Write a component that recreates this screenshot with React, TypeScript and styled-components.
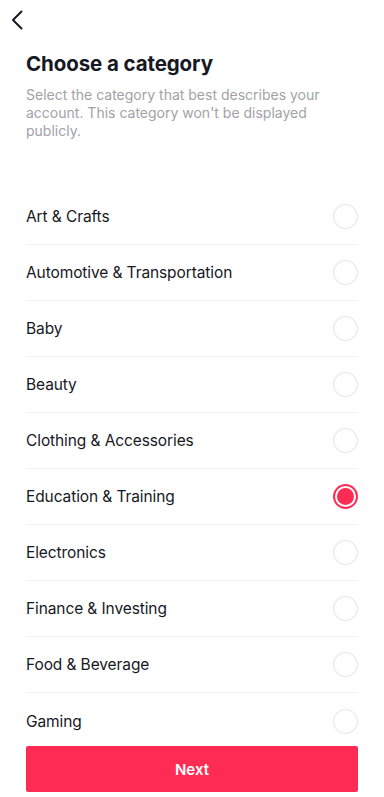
import React, { useState } from "react";
import styled, { createGlobalStyle } from "styled-components";

const GlobalStyle = createGlobalStyle`
  * {
    box-sizing: border-box;
  }
  body {
    margin: 0;
    background: #ffffff;
    font-family: Inter, "Noto Sans", "Liberation Sans", sans-serif;
    -webkit-font-smoothing: antialiased;
  }
`;

const Screen = styled.div`
  width: 384px;
  height: 797px;
  display: flex;
  flex-direction: column;
  background: #ffffff;
  overflow: hidden;
`;

const TopBar = styled.div`
  height: 40px;
  display: flex;
  align-items: center;
  padding-left: 8px;
`;

const BackButton = styled.button`
  width: 18px;
  height: 22px;
  border: none;
  background: none;
  padding: 0;
  display: flex;
  align-items: center;
  justify-content: center;
  color: #161823;
`;

const Header = styled.div`
  padding: 11px 26px 0;
`;

const Title = styled.h1`
  margin: 0;
  font-size: 20.5px;
  line-height: 26px;
  font-weight: 700;
  color: #161823;
  letter-spacing: -0.1px;
`;

const Subtitle = styled.p`
  margin: 9px 0 0;
  font-size: 14px;
  line-height: 18px;
  color: #a2a2a6;
  padding-right: 30px;
`;

const List = styled.ul`
  list-style: none;
  margin: 49px 26px 0;
  padding: 0;
  flex: 1;
  overflow: hidden;
`;

const Row = styled.li`
  height: 56px;
  display: flex;
  align-items: center;
  justify-content: space-between;
  border-bottom: 1px solid #f1f1f2;
  cursor: pointer;

  &:last-child {
    border-bottom: none;
  }
`;

const Label = styled.span`
  font-size: 15.5px;
  color: #161823;
  letter-spacing: -0.1px;
`;

const Radio = styled.span<{ $checked: boolean }>`
  width: 25px;
  height: 25px;
  border-radius: 50%;
  border: ${(p) => (p.$checked ? "2px solid #fe2c55" : "1.5px solid #e3e3e4")};
  display: flex;
  align-items: center;
  justify-content: center;

  &::after {
    content: "";
    width: 17px;
    height: 17px;
    border-radius: 50%;
    background: ${(p) => (p.$checked ? "#fe2c55" : "transparent")};
  }
`;

const Footer = styled.div`
  padding: 0 26px 5px;
  margin-top: -50px;
  position: relative;
`;

const NextButton = styled.button`
  width: 100%;
  height: 46px;
  border: none;
  border-radius: 2px;
  background: #fe2c55;
  color: #ffffff;
  font-family: inherit;
  font-size: 15px;
  font-weight: 600;
`;

const categories = [
  "Art & Crafts",
  "Automotive & Transportation",
  "Baby",
  "Beauty",
  "Clothing & Accessories",
  "Education & Training",
  "Electronics",
  "Finance & Investing",
  "Food & Beverage",
  "Gaming",
];

export default function App() {
  const [selected, setSelected] = useState("Education & Training");

  return (
    <>
      <GlobalStyle />
      <Screen>
        <TopBar>
          <BackButton aria-label="Back">
            <svg width="12" height="20" viewBox="0 0 12 20" fill="none">
              <path
                d="M10.5 1.5 2 10l8.5 8.5"
                stroke="currentColor"
                strokeWidth="2"
                strokeLinecap="round"
                strokeLinejoin="round"
              />
            </svg>
          </BackButton>
        </TopBar>
        <Header>
          <Title>Choose a category</Title>
          <Subtitle>
            Select the category that best describes your account. This category
            won't be displayed publicly.
          </Subtitle>
        </Header>
        <List>
          {categories.map((c) => (
            <Row key={c} onClick={() => setSelected(c)}>
              <Label>{c}</Label>
              <Radio $checked={selected === c} />
            </Row>
          ))}
        </List>
        <Footer>
          <NextButton>Next</NextButton>
        </Footer>
      </Screen>
    </>
  );
}
